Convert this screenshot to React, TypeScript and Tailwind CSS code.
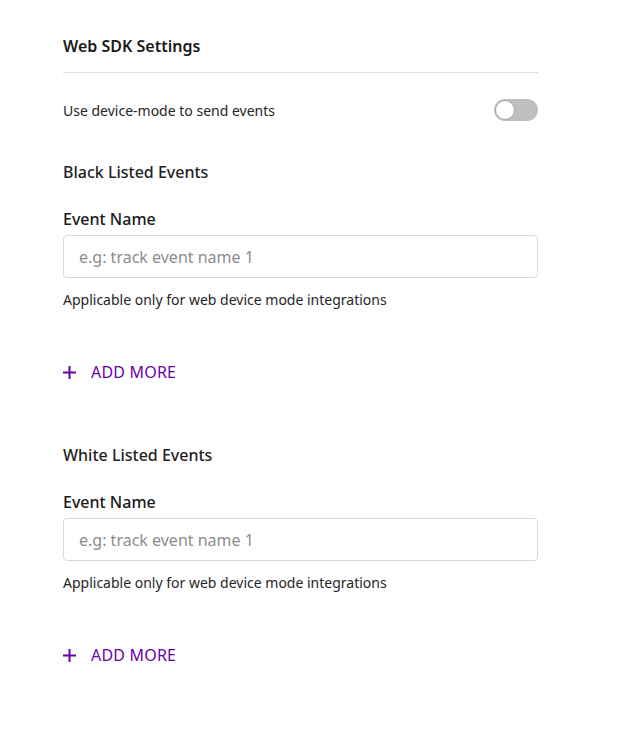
import React from "react";

function Section({ title }: { title: string }) {
  return (
    <div>
      <div className="text-[16px] leading-[24px] font-medium text-[#1f1f1f]">{title}</div>
      <div className="mt-[23px] text-[16px] leading-[24px] font-medium text-[#1a1a1a]">Event Name</div>
      <div className="mt-[4px] h-[43px] rounded-[4px] border border-[#d9d9d9] flex items-center px-[15px]">
        <span className="text-[16px] text-[#8c8c8c]">e.g: track event name 1</span>
      </div>
      <div className="mt-[12px] text-[14px] leading-[20px] text-[#262626]">
        Applicable only for web device mode integrations
      </div>
      <div className="mt-[50px] flex items-center h-[24px] text-[#6a00a8]">
        <svg width="13" height="13" viewBox="0 0 13 13" className="mr-[15px]">
          <path d="M6.5 0v13M0 6.5h13" stroke="currentColor" strokeWidth="2" />
        </svg>
        <span className="text-[16px] font-normal tracking-[0.2px]">ADD MORE</span>
      </div>
    </div>
  );
}

export default function App() {
  return (
    <div
      className="min-h-[735px] w-[628px] bg-white"
      style={{ fontFamily: '"Noto Sans", "Open Sans", sans-serif' }}
    >
      <div className="ml-[63px] w-[475px] pt-[34px]">
        <div className="text-[16px] leading-[24px] font-semibold text-[#1a1a1a]">Web SDK Settings</div>
        <div className="mt-[14px] border-t border-[#dedede]" />
        <div className="mt-[26px] flex items-center justify-between h-[22px]">
          <span className="text-[14px] text-[#262626]">Use device-mode to send events</span>
          <div className="w-[44px] h-[22px] rounded-full bg-[#bfbfbf] relative">
            <div className="absolute left-[1px] top-[1px] w-[20px] h-[20px] rounded-full bg-white border border-[#a6a6a6]" />
          </div>
        </div>
        <div className="mt-[39px]">
          <Section title="Black Listed Events" />
        </div>
        <div className="mt-[59px]">
          <Section title="White Listed Events" />
        </div>
      </div>
    </div>
  );
}
